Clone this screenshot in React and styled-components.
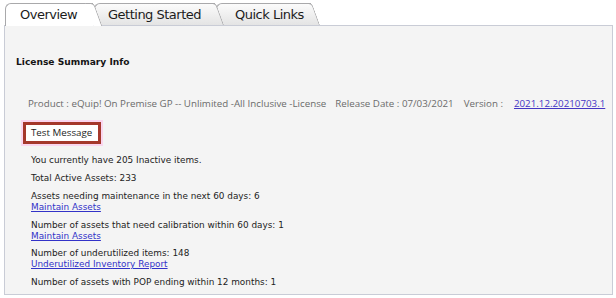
import React from "react";
import styled, { createGlobalStyle } from "styled-components";

const Global = createGlobalStyle`
  html, body { margin: 0; padding: 0; background: #ffffff; }
  * { box-sizing: border-box; }
`;

const Page = styled.div`
  padding-top: 3px;
  width: 616px;
`;

const TabBar = styled.div`
  display: flex;
  padding-left: 5px;
  height: 22px;
  position: relative;
  z-index: 2;
`;

const Tab = styled.div`
  position: relative;
  z-index: ${(p) => p.$z};
  width: ${(p) => p.$w}px;
  height: ${(p) => (p.$active ? 23 : 22)}px;
  margin-right: 1px;
  padding-left: ${(p) => p.$pl}px;
  display: flex;
  align-items: center;
  padding-bottom: ${(p) => (p.$active ? 1 : 0)}px;
  font-family: "DejaVu Sans", sans-serif;
  font-size: 13px;
  letter-spacing: -0.5px;
  color: #1c1c1c;
  white-space: nowrap;
  border: 1px solid #a9a9ab;
  border-right: none;
  border-bottom: none;
  border-top-left-radius: 6px;
  background: ${(p) =>
    p.$active ? "#ffffff" : "linear-gradient(#fbfbfb, #e4e4e4)"};
  cursor: default;

  &::after {
    content: "";
    position: absolute;
    top: -1px;
    bottom: 0;
    left: calc(100% - 8px);
    width: 8px;
    border-top: 1px solid #a9a9ab;
    border-right: 1px solid #a9a9ab;
    border-top-right-radius: 4px;
    background: inherit;
    transform: skewX(20deg);
    transform-origin: top left;
  }
`;

const Panel = styled.div`
  margin-left: 4px;
  width: 609px;
  height: 270px;
  border: 1px solid #c9ccd6;
  background: #f4f4f4;
  padding: 29px 0 0 11px;
  display: flex;
  flex-direction: column;
  align-items: flex-start;
  position: relative;
  z-index: 1;
`;

const Title = styled.div`
  font-family: "DejaVu Sans", sans-serif;
  font-weight: bold;
  font-size: 9.1px;
  line-height: 14px;
  color: #151515;
`;

const ProductRow = styled.div`
  margin-top: 27px;
  margin-left: 12px;
  display: flex;
  line-height: 16px;
  font-family: "Open Sans", sans-serif;
  font-size: 9.75px;
  color: #6b6b6b;
  white-space: nowrap;
`;

const Field = styled.span`
  margin-left: ${(p) => p.$gap || 0}px;
`;

const VersionLink = styled.a`
  margin-left: 11px;
  color: #4536c4;
  text-decoration: underline;
`;

const MessageBox = styled.div`
  margin-top: 10px;
  margin-left: 7px;
  height: 22px;
  border: 3px solid #a5382c;
  background: #ffffff;
  box-shadow: 0 0 0 2px rgba(255, 190, 235, 0.55);
  padding: 0 6px 0 5px;
  line-height: 16px;
  font-family: "Open Sans", sans-serif;
  font-size: 9.75px;
  color: #1e1e1e;
`;

const List = styled.div`
  margin-top: 11px;
  margin-left: 15px;
  display: flex;
  flex-direction: column;
  gap: 7px;
  font-family: "DejaVu Sans", sans-serif;
  font-size: 8.9px;
  line-height: 10.9px;
  color: #222;
`;

const Item = styled.div`
  display: flex;
  flex-direction: column;
  align-items: flex-start;
`;

const ItemLink = styled.a`
  color: #3232c8;
  text-decoration: underline;
`;

const tabs = [
  { label: "Overview", w: 88, pl: 14, active: true },
  { label: "Getting Started", w: 121, pl: 13 },
  { label: "Quick Links", w: 95, pl: 18 },
];

const items = [
  { text: "You currently have 205 Inactive items." },
  { text: "Total Active Assets: 233" },
  { text: "Assets needing maintenance in the next 60 days: 6", link: "Maintain Assets" },
  { text: "Number of assets that need calibration within 60 days: 1", link: "Maintain Assets" },
  { text: "Number of underutilized items: 148", link: "Underutilized Inventory Report" },
  { text: "Number of assets with POP ending within 12 months: 1" },
];

export default function App() {
  return (
    <Page>
      <Global />
      <TabBar>
        {tabs.map((t, i) => (
          <Tab key={t.label} $w={t.w} $pl={t.pl} $active={t.active} $z={10 - i}>
            {t.label}
          </Tab>
        ))}
      </TabBar>
      <Panel>
        <Title>License Summary Info</Title>
        <ProductRow>
          <Field>Product : eQuip! On Premise GP -- Unlimited -All Inclusive -License</Field>
          <Field $gap={9}>Release Date : 07/03/2021</Field>
          <Field $gap={10}>Version :</Field>
          <VersionLink href="#">2021.12.20210703.1</VersionLink>
        </ProductRow>
        <MessageBox>Test Message</MessageBox>
        <List>
          {items.map((it) => (
            <Item key={it.text}>
              <span>{it.text}</span>
              {it.link && <ItemLink href="#">{it.link}</ItemLink>}
            </Item>
          ))}
        </List>
      </Panel>
    </Page>
  );
}
